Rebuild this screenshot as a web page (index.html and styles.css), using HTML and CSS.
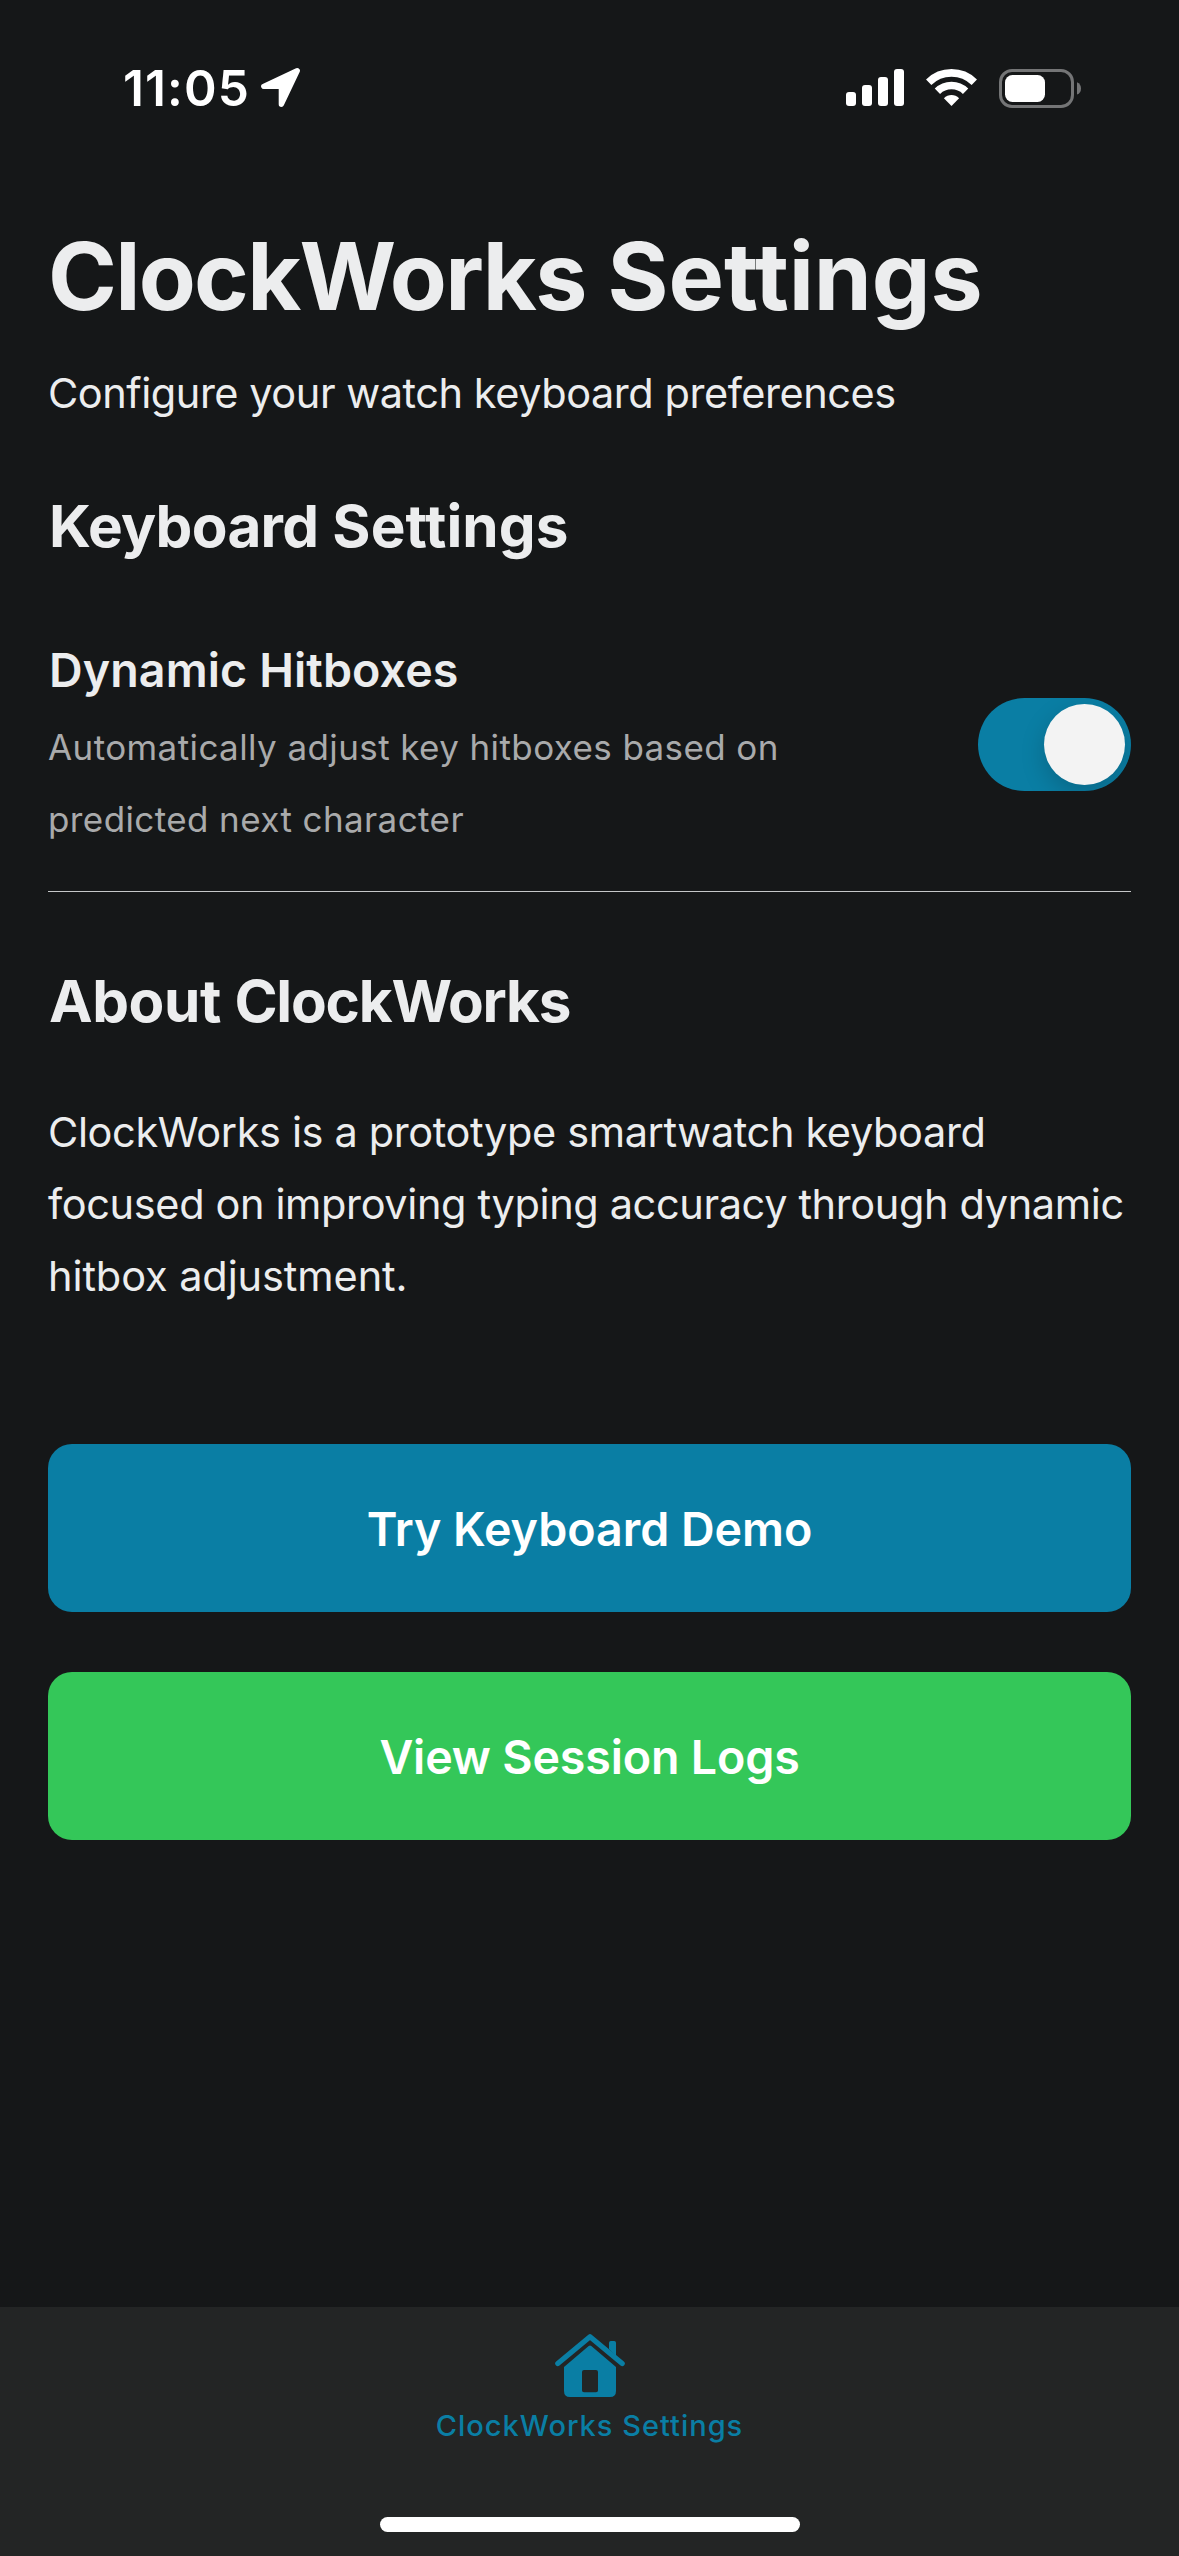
FILE: index.html
```html
<!DOCTYPE html>
<html lang="en">
<head>
<meta charset="utf-8">
<title>ClockWorks Settings</title>
<link rel="stylesheet" href="styles.css">
</head>
<body>
<div class="screen">
  <header class="status-bar">
    <div class="status-left">
      <span class="time">11:05</span>
      <svg class="location" width="40" height="40" viewBox="0 0 40 40"><path d="M36.2 2.8 2.8 18.4H20.4V36.2Z" fill="#fff" stroke="#fff" stroke-width="5.4" stroke-linejoin="round"/></svg>
    </div>
    <div class="status-right">
      <svg width="58" height="38" viewBox="0 0 58 38" fill="#fff">
        <rect x="0" y="23" width="10" height="14" rx="3"/>
        <rect x="16" y="16" width="10" height="21" rx="3"/>
        <rect x="32" y="8" width="10" height="29" rx="3"/>
        <rect x="48" y="0" width="10" height="37" rx="3"/>
      </svg>
      <svg width="51" height="38" viewBox="0 0 51 38">
        <g fill="none" stroke="#fff" stroke-width="7.6">
          <path d="M2.7 13.2A32.6 32.6 0 0 1 48.3 13.2"/>
          <path d="M11.4 22.2A20.2 20.2 0 0 1 39.6 22.2"/>
        </g>
        <path d="M25.5 37 17.9 29.3Q21.2 26 25.5 26T33.1 29.3Z" fill="#fff"/>
      </svg>
      <svg width="82" height="39" viewBox="0 0 82 39">
        <rect x="1.5" y="1.5" width="72" height="36" rx="11.5" fill="none" stroke="#747576" stroke-width="3"/>
        <rect x="6" y="6" width="40" height="27" rx="7.5" fill="#fff"/>
        <path d="M78 13.2Q82 15 82 19.4T78 25.6Z" fill="#747576"/>
      </svg>
    </div>
  </header>

  <main class="content">
    <h1><span class="title-name">ClockWorks</span> Settings</h1>
    <p class="subtitle">Configure your watch keyboard preferences</p>

    <h2 class="keyboard-heading"><span class="keyboard-word">Keyboard</span> Settings</h2>
    <section class="setting">
      <div>
        <h3>Dynamic Hitboxes</h3>
        <p class="hint">Automatically adjust key hitboxes based on<br>predicted next character</p>
      </div>
      <div class="toggle" role="switch" aria-checked="true"><span class="thumb"></span></div>
    </section>

    <h2 class="about-heading">About <span class="about-name">ClockWorks</span></h2>
    <p class="about">ClockWorks is a prototype smartwatch keyboard<br>focused on improving typing accuracy through dynamic<br><span class="last-line">hitbox adjustment.</span></p>

    <div class="actions">
      <button class="button demo">Try Keyboard Demo</button>
      <button class="button logs">View Session Logs</button>
    </div>
  </main>

  <nav class="tab-bar">
    <svg width="70" height="63" viewBox="0 0 70 63" fill="#0a7ea4">
      <path d="M2.8 29.6 35 2.8 67.2 29.6" fill="none" stroke="#0a7ea4" stroke-width="5.2" stroke-linecap="round" stroke-linejoin="round"/>
      <path d="M54 15V8.8Q54 7 55.8 7H59.2Q61 7 61 8.8V22Z"/>
      <path fill-rule="evenodd" d="M33.7 12Q35 11 36.3 12L61 33V57Q61 63 55 63H15Q9 63 9 57V33ZM29 36Q27 36 27 38V56.5Q27 58.3 29 58.3H41Q43 58.3 43 56.5V38Q43 36 41 36Z"/>
    </svg>
    <span class="tab-label">ClockWorks Settings</span>
    <div class="home-indicator"></div>
  </nav>
</div>
</body>
</html>
```
FILE: styles.css
```css
* { box-sizing: border-box; margin: 0; padding: 0; }

body {
  background: #151718;
  color: #ecedee;
  font-family: Inter, "Liberation Sans", sans-serif;
}

svg { display: block; flex: none; }

.screen {
  width: 1179px;
  height: 2556px;
  display: flex;
  flex-direction: column;
  overflow: hidden;
}

.status-bar {
  height: 177px;
  padding: 58px 98px 59px 123px;
  display: flex;
  justify-content: space-between;
  color: #fff;
}

.status-left, .status-right {
  height: 60px;
  display: flex;
  align-items: center;
}

.status-left { gap: 11px; }
.status-right { gap: 22px; }

.time {
  font-size: 49.5px;
  font-weight: 600;
  line-height: 60px;
  letter-spacing: 1.1px;
}

.content {
  flex: 1;
  padding: 51px 48px 0;
}

h1 {
  font-size: 93.2px;
  line-height: 96px;
  letter-spacing: -0.1px;
}

.title-name { letter-spacing: -1.75px; }

.subtitle, .about {
  font-size: 41.5px;
  line-height: 72px;
  letter-spacing: -0.46px;
}

.subtitle { margin-top: 33px; }

h2 {
  padding-left: 1px;
  font-size: 58.4px;
  line-height: 84px;
}

.keyboard-heading {
  margin-top: 55px;
  letter-spacing: 0.1px;
}

.keyboard-word { letter-spacing: -0.7px; }

.setting {
  margin-top: 66px;
  padding-bottom: 36px;
  border-bottom: 1px solid #c5c7c8;
  display: flex;
  align-items: center;
  justify-content: space-between;
}

h3 {
  padding-left: 1px;
  font-size: 46.6px;
  font-weight: 600;
  line-height: 72px;
  letter-spacing: 0.1px;
}

.hint {
  margin-top: 5px;
  font-size: 35px;
  line-height: 72px;
  letter-spacing: 0.4px;
  color: #a9aaab;
}

.toggle {
  width: 153px;
  height: 93px;
  padding: 6px;
  border-radius: 47px;
  background: #0a7ea4;
  display: flex;
  justify-content: flex-end;
  overflow: hidden;
}

.thumb {
  width: 81px;
  height: 81px;
  border-radius: 50%;
  background: #f3f3f3;
  box-shadow: 0 9px 24px rgba(0, 0, 0, 0.18);
}

.about-heading {
  margin-top: 67px;
  letter-spacing: -0.4px;
}

.about-name { letter-spacing: -1.2px; }

.about {
  margin-top: 53px;
  letter-spacing: -0.375px;
}

.last-line { letter-spacing: -0.1px; }

.actions {
  margin-top: 132px;
  display: flex;
  flex-direction: column;
  gap: 60px;
}

.button {
  height: 168px;
  padding-top: 2px;
  border: 0;
  border-radius: 24px;
  color: #fff;
  font: 600 46.6px/72px Inter, "Liberation Sans", sans-serif;
}

.demo { background: #0a7ea4; letter-spacing: -0.03px; }
.logs { background: #34c759; letter-spacing: -0.17px; }

.tab-bar {
  height: 249px;
  padding-top: 27px;
  background: #232525;
  display: flex;
  flex-direction: column;
  align-items: center;
}

.tab-label {
  margin-top: 11px;
  font-size: 29px;
  font-weight: 500;
  line-height: 36px;
  letter-spacing: 1px;
  color: #0a7ea4;
}

.home-indicator {
  width: 420px;
  height: 15px;
  margin: auto 0 24px;
  border-radius: 8px;
  background: #fff;
}
```
